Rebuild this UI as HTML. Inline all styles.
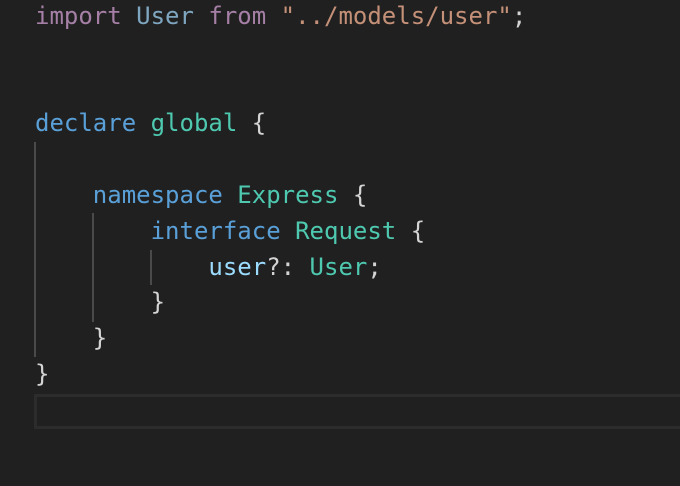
<!DOCTYPE html>
<html><head><meta charset="utf-8"><style>
html,body{margin:0;padding:0;background:#202020;width:680px;height:486px;overflow:hidden}
body{position:relative;font-family:"DejaVu Sans Mono","Liberation Mono",monospace;font-size:24px}
.l{position:absolute;left:35px;height:36px;line-height:36px;white-space:pre;color:#d4d4d4}
.k{color:#a57fa5}.b{color:#5aa0d8}.t{color:#4ec9b0}.v{color:#9cdcfe}.s{color:#c49077}
.g{position:absolute;width:2px;background:#4a4a4a}
.cur{position:absolute;left:34px;top:394px;width:660px;height:35px;box-sizing:border-box;border:3px solid #2c2c2c}
</style></head><body>
<div class="cur"></div>
<div class="g" style="left:34px;top:142px;height:215px"></div>
<div class="g" style="left:92px;top:213px;height:109px"></div>
<div class="g" style="left:150px;top:250px;height:35px"></div>
<div class="l" style="top:-2px"><span class="k">import</span> <span style="color:#7fa6c0">User</span> <span class="k">from</span> <span class="s">"../models/user"</span>;</div>
<div class="l" style="top:105px"><span class="b">declare</span> <span class="t">global</span> {</div>
<div class="l" style="top:177px">    <span class="b">namespace</span> <span class="t">Express</span> {</div>
<div class="l" style="top:213px">        <span class="b">interface</span> <span class="t">Request</span> {</div>
<div class="l" style="top:249px">            <span class="v">user</span>?: <span class="t">User</span>;</div>
<div class="l" style="top:284px">        }</div>
<div class="l" style="top:320px">    }</div>
<div class="l" style="top:356px">}</div>
</body></html>
